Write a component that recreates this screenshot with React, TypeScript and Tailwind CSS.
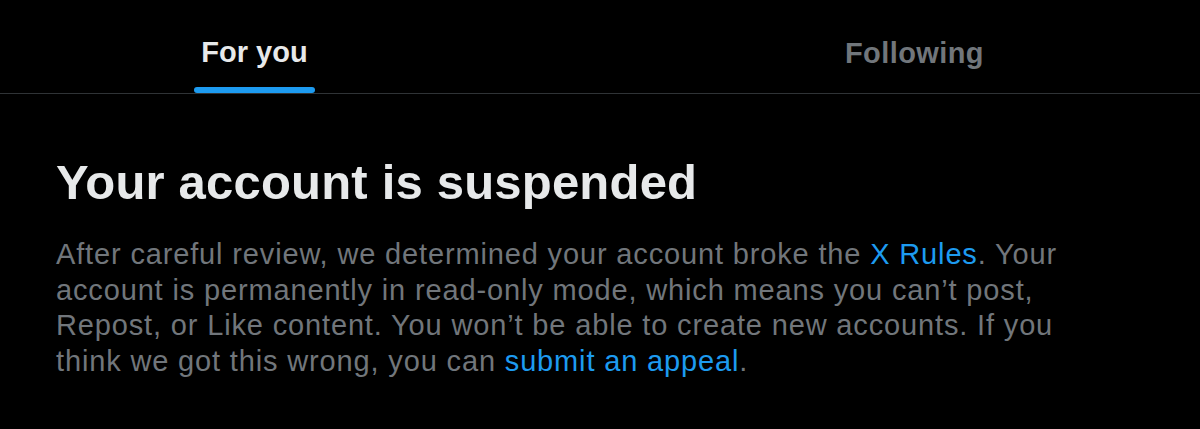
export default function App() {
  return (
    <div className="w-[1200px] h-[429px] bg-black overflow-hidden" style={{ fontFamily: '"Liberation Sans", Arial, sans-serif' }}>
      <div className="flex h-[94px] border-b border-[#2f3336]">
        <div className="ml-[194px] w-[121px] flex flex-col items-center">
          <div className="flex-1 flex items-center pt-[19px] text-[29px] font-bold text-[#e7e9ea]">For you</div>
          <div className="h-[6px] w-full rounded-full bg-[#1d9bf0]" />
        </div>
        <div className="ml-[530px] flex items-center pt-[14px] text-[29px] font-bold text-[#71767b] tracking-[0.4px]">Following</div>
      </div>
      <div className="px-[56px] pt-[60px]">
        <h1 className="text-[49px] leading-[56px] font-bold text-[#e7e9ea] tracking-[0.2px]">Your account is suspended</h1>
        <p className="mt-[27px] text-[29px] leading-[35.5px] text-[#71767b] whitespace-nowrap tracking-[0.85px]">
          After careful review, we determined your account broke the <span className="text-[#1d9bf0]">X Rules</span>. Your
          <br />
          account is permanently in read-only mode, which means you can’t post,
          <br />
          Repost, or Like content. You won’t be able to create new accounts. If you
          <br />
          think we got this wrong, you can <span className="text-[#1d9bf0]">submit an appeal</span>.
        </p>
      </div>
    </div>
  );
}
